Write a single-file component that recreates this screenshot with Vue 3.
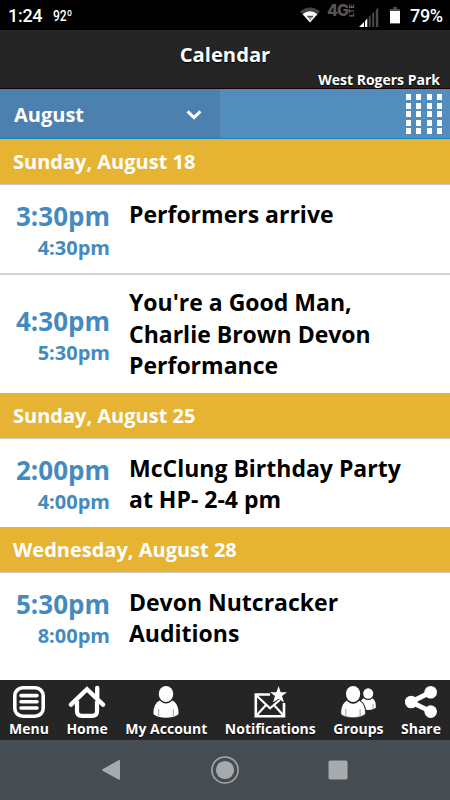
<template>
  <div class="screen">
    <div class="status-bar">
      <span class="clock">1:24</span>
      <span class="temp">92º</span>
      <svg class="wifi" viewBox="0 0 20 16" width="20" height="16">
        <path d="M0 4.6Q10-3.6 20 4.6L16.4 8.4Q10 3.6 3.6 8.4Z" fill="#444" />
        <path d="M2.6 7.2Q10 1.4 17.4 7.2L10 15.6Z" fill="#fff" />
        <path d="M6.6 8.8h7.2l-1.5 1.9H8.2zM8.8 11.6h2.8l-1.4 1.6z" fill="#555" />
      </svg>
      <span class="network">4G</span>
      <span class="lte">LTE</span>
      <svg class="signal" viewBox="0 0 20 20" width="20" height="20">
        <path d="M0 20L5 15V20ZM6 14L8.3 11.5V20H6Z" fill="#fff" />
        <path d="M9.7 10L11.7 8V20h-2zM13.2 6.8l2-2V20h-2zM16.8 3L19.3.3V20h-2.5z" fill="#4a4a4a" />
      </svg>
      <svg class="battery" viewBox="0 0 10 17" width="10" height="17">
        <path d="M3 0h4v2h3v3H0V2h3z" fill="#4d4d4d" />
        <path d="M0 4h10v12.4H0z" fill="#fff" />
      </svg>
      <span class="percent">79%</span>
    </div>

    <header class="header">
      <h1>Calendar</h1>
      <p>West Rogers Park</p>
    </header>

    <div class="month-bar">
      <button class="month-select">
        <span>August</span>
        <svg viewBox="0 0 16 10" width="16" height="10">
          <path d="M1.6 1.4L8 7.6l6.4-6.2" fill="none" stroke="#fff" stroke-width="3" />
        </svg>
      </button>
      <div class="grid-icon">
        <i v-for="n in 20" :key="n"></i>
      </div>
    </div>

    <main class="agenda">
      <section v-for="day in days" :key="day.label">
        <h2>{{ day.label }}</h2>
        <div v-for="event in day.events" :key="event.title" class="event">
          <div class="times">
            <span class="start">{{ event.start }}</span>
            <span class="end">{{ event.end }}</span>
          </div>
          <div class="title">{{ event.title }}</div>
        </div>
      </section>
    </main>

    <nav class="tabs">
      <a class="tab menu">
        <svg viewBox="0 0 34 34" width="34" height="34">
          <rect x="2.8" y="2.8" width="28.4" height="28.4" rx="8" fill="none" stroke="#fff" stroke-width="3.6" />
          <path d="M9 10.6h16M9 16.8h16M9 23h16" stroke="#fff" stroke-width="3.6" stroke-linecap="round" />
        </svg>
        <span>Menu</span>
      </a>
      <a class="tab home">
        <svg viewBox="0 0 38 34" width="38" height="34">
          <path d="M3 19.6L19 4.2l16 15.4M29.2 3V13" fill="none" stroke="#fff" stroke-width="4.4" stroke-linecap="round" />
          <path d="M9 16v10.2q0 4.6 4.8 4.6h10.4q4.8 0 4.8-4.6V16" fill="none" stroke="#fff" stroke-width="4.2" />
        </svg>
        <span>Home</span>
      </a>
      <a class="tab account">
        <svg viewBox="0 0 26 34" width="26" height="34">
          <ellipse cx="13" cy="9" rx="7.2" ry="8" fill="#fff" />
          <path d="M6.5 15.5Q13 21.5 19.5 15.5Q25.6 18.6 25.6 28.5Q25 30.5 20.6 31.7Q13 34 5.4 31.7Q1 30.5.4 28.5Q.4 18.6 6.5 15.5Z" fill="#fff" />
          <path d="M5.7 24v7M20.3 24v7" stroke="#888" stroke-width=".8" />
        </svg>
        <span>My Account</span>
      </a>
      <a class="tab notifications">
        <svg viewBox="0 0 34 34" width="34" height="34">
          <path d="M17 9.5H2.8V31.2H31V18" fill="none" stroke="#fff" stroke-width="2.6" />
          <path d="M3.5 10.5L17 23.3L26.8 15M3.5 30.5L13 20M30.5 30.5L21 20" fill="none" stroke="#fff" stroke-width="2.2" />
          <path d="M25.6 1L27.7 7.2H34L29 11.1L31 17.5L25.6 13.7L20 17.5L22 11.1L17 7.2H23.4Z" fill="#fff" />
        </svg>
        <span>Notifications</span>
      </a>
      <a class="tab groups">
        <svg viewBox="0 0 38 34" width="38" height="34">
          <ellipse cx="29.2" cy="8.5" rx="5" ry="5.3" fill="#fff" />
          <path d="M24.7 13.2Q29.2 17 33.5 13.2Q37 15.5 36.9 22.5Q34 25.4 27 24.8Q25.9 18.2 21.9 16Q22.8 14.2 24.7 13.2Z" fill="#fff" />
          <ellipse cx="14.1" cy="9" rx="7.1" ry="8" fill="#fff" />
          <path d="M7.7 15.5Q14.1 21.5 20.5 15.5Q26.5 18.6 26.5 28.5Q26 30.5 21.5 31.7Q14.1 34 6.5 31.7Q2.2 30.5 1.8 28.5Q1.8 18.6 7.7 15.5Z" fill="#fff" stroke="#252525" stroke-width=".6" />
          <path d="M6.8 24v7M21.1 24v7M34.1 19v5" stroke="#888" stroke-width=".8" />
        </svg>
        <span>Groups</span>
      </a>
      <a class="tab share">
        <svg viewBox="0 0 34 34" width="34" height="34">
          <path d="M27 7L7 17l20 9.6" fill="none" stroke="#fff" stroke-width="4.8" />
          <circle cx="26.7" cy="7.2" r="6.3" fill="#fff" />
          <circle cx="7.2" cy="17" r="6.3" fill="#fff" />
          <circle cx="26.7" cy="26.6" r="6.3" fill="#fff" />
        </svg>
        <span>Share</span>
      </a>
    </nav>

    <div class="system-nav">
      <svg class="back" viewBox="0 0 20 22" width="20" height="22">
        <path d="M1.5 10.3L17.5 1.3Q19 .6 19 2.3V19.7Q19 21.4 17.5 20.6L1.5 11.7Q.6 11 1.5 10.3Z" fill="#a7abae" />
      </svg>
      <svg viewBox="0 0 28 28" width="28" height="28">
        <circle cx="14" cy="14" r="13.1" fill="none" stroke="#a7abae" stroke-width="1.5" />
        <circle cx="14" cy="14" r="9.1" fill="#a7abae" />
      </svg>
      <svg class="recents" viewBox="0 0 20 20" width="20" height="20">
        <rect x=".5" y=".5" width="19" height="19" rx="1.8" fill="#a7abae" />
      </svg>
    </div>
  </div>
</template>

<script setup>
const days = [
  {
    label: 'Sunday, August 18',
    events: [
      { start: '3:30pm', end: '4:30pm', title: 'Performers arrive' },
      { start: '4:30pm', end: '5:30pm', title: "You're a Good Man, Charlie Brown Devon Performance" }
    ]
  },
  {
    label: 'Sunday, August 25',
    events: [
      { start: '2:00pm', end: '4:00pm', title: 'McClung Birthday Party at HP- 2-4 pm' }
    ]
  },
  {
    label: 'Wednesday, August 28',
    events: [
      { start: '5:30pm', end: '8:00pm', title: 'Devon Nutcracker Auditions' }
    ]
  }
]
</script>

<style>
body {
  margin: 0;
  background: #fff;
}
</style>

<style scoped>
.screen {
  width: 450px;
  height: 800px;
  display: flex;
  flex-direction: column;
  overflow: hidden;
  background: #fff;
  font-family: 'Open Sans', sans-serif;
  font-weight: 700;
}
.screen * {
  box-sizing: border-box;
}
svg {
  display: block;
  flex: none;
}

.status-bar {
  flex: none;
  height: 30px;
  display: flex;
  align-items: flex-start;
  background: #000;
  color: #fff;
  font-family: Roboto, sans-serif;
  font-weight: 400;
  white-space: nowrap;
}
.clock {
  width: 45px;
  padding-left: 8px;
  font-size: 18px;
  font-weight: 500;
  letter-spacing: -0.3px;
  line-height: 32px;
}
.temp {
  width: 255px;
  padding-left: 8px;
  font-size: 15.5px;
  font-weight: 500;
  line-height: 32px;
  transform: scaleX(0.78);
  transform-origin: 8px 0;
}
.wifi {
  margin-top: 7px;
}
.network {
  width: 20px;
  margin-left: 7px;
  color: #555;
  font-family: Inter, sans-serif;
  font-size: 16px;
  font-weight: 800;
  letter-spacing: -1px;
  line-height: 20px;
}
.lte {
  width: 10px;
  height: 14px;
  margin-top: 3px;
  color: #666;
  font-family: Roboto, sans-serif;
  font-size: 8px;
  font-weight: 700;
  line-height: 10px;
  writing-mode: vertical-rl;
  transform: rotate(180deg);
}
.signal {
  margin: 7px 0 0 2px;
}
.battery {
  margin: 7px 0 0 11px;
}
.percent {
  margin-left: 10px;
  font-size: 18px;
  font-weight: 500;
  letter-spacing: -0.3px;
  line-height: 32px;
}

.header {
  flex: none;
  height: 59px;
  background: #252525;
  border-bottom: 1px solid #1b0000;
  color: #fff;
  text-shadow: 0 1px 1px #000;
}
.header h1 {
  margin: 0;
  padding-top: 9px;
  font-size: 20.2px;
  font-weight: 700;
  line-height: 30px;
  text-align: center;
}
.header p {
  margin: 0;
  padding: 0 10px 0 0;
  font-size: 14px;
  font-weight: 700;
  line-height: 21px;
  text-align: right;
}

.month-bar {
  flex: none;
  height: 50px;
  display: flex;
  justify-content: space-between;
  background: #538dbd;
  border-bottom: 1px solid #0d84c4;
}
.month-select {
  width: 220px;
  display: flex;
  align-items: center;
  justify-content: space-between;
  padding: 2px 18px 0 14px;
  border: 0;
  background: #4b80af;
  color: #fff;
  font-family: inherit;
  font-size: 20px;
  font-weight: 700;
  line-height: 30px;
}
.grid-icon {
  display: grid;
  grid-template-columns: repeat(4, 5px);
  grid-auto-rows: 6px;
  column-gap: 5.5px;
  row-gap: 2.5px;
  padding: 5px 8px 0 0;
}
.grid-icon i {
  background: #fff;
}

.agenda {
  flex: 1;
  min-height: 0;
  overflow: hidden;
}
.agenda h2 {
  height: 46px;
  margin: 0;
  padding-left: 13px;
  background: #e6b333;
  border-bottom: 1px solid #c9c9c9;
  color: #fff;
  font-size: 20px;
  font-weight: 700;
  line-height: 46px;
}
.event {
  display: flex;
  height: 88px;
}
.event + .event {
  height: 120px;
  border-top: 2px solid #d2d2d2;
}
.times {
  width: 110px;
  display: flex;
  flex-direction: column;
  justify-content: center;
  padding-top: 2px;
  color: #458abe;
  text-align: right;
}
.start {
  font-size: 26px;
  line-height: 34px;
}
.end {
  font-size: 20px;
  line-height: 29px;
}
.title {
  width: 290px;
  margin-left: 19px;
  padding: 13.5px 12px 0 0;
  color: #000;
  font-size: 23px;
  line-height: 31.7px;
}
.event + .event .title {
  padding-top: 12px;
}

.tabs {
  flex: none;
  height: 60px;
  display: flex;
  justify-content: space-between;
  padding: 5px 9px 0;
  background: #252525;
  color: #fff;
  font-size: 14px;
  font-weight: 700;
  text-shadow: 0 1px 1px #000;
}
.tab {
  display: flex;
  flex-direction: column;
  align-items: center;
  white-space: nowrap;
}
.tab span {
  line-height: 20px;
}

.system-nav {
  flex: none;
  height: 60px;
  display: flex;
  align-items: center;
  padding-left: 101px;
  background: #454d52;
}
.back {
  margin-right: 90px;
}
.recents {
  margin-left: 88.5px;
}
</style>
